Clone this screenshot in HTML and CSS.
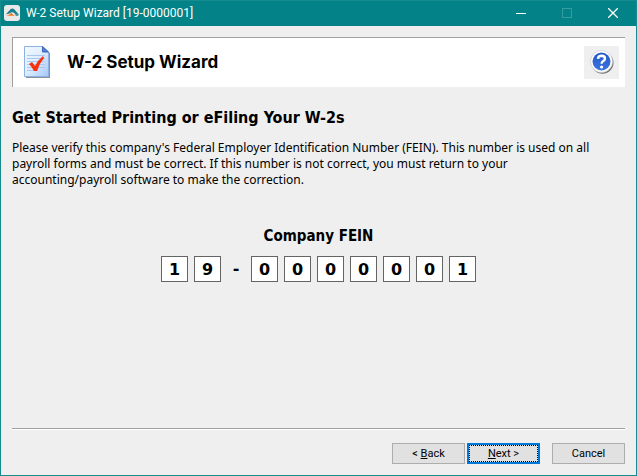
FILE: index.html
```
<!DOCTYPE html>
<html lang="en">
<head>
    <meta charset="UTF-8">
    <meta name="viewport" content="width=device-width, initial-scale=1.0">
    <title>W-2 Setup Wizard [19-0000001]</title>
    <link rel="stylesheet" href="styles.css">
</head>
<body>
    <div class="window">
        <div class="title-bar">
            <svg class="app-icon" width="16" height="16" viewBox="0 0 16 16" aria-hidden="true">
                <rect x="0" y="0" width="16" height="16" rx="3" fill="#e9e9e9"/>
                <path d="M2 9.2L6.5 4.2Q8 3 10 4L14.8 9.5H11.5Q10 6.8 7.5 7.2Q5 9.2 2 9.2Z" fill="#167f90"/>
                <path d="M2 10.8Q5 10.4 7.5 7.8Q8.5 10 11 10.8Z" fill="#f07a22"/>
                <path d="M11 9.5H15L14 10.8H12Z" fill="#167f90"/>
            </svg>
            <span class="title-text">W-2 Setup Wizard [19-0000001]</span>
            <div class="window-controls">
                <button type="button" class="control" aria-label="Minimize">
                    <svg width="10" height="10" viewBox="0 0 10 10"><path d="M0 5.5H10" stroke="#fff"/></svg>
                </button>
                <button type="button" class="control" aria-label="Maximize" disabled>
                    <svg width="10" height="10" viewBox="0 0 10 10"><rect x="0.5" y="0.5" width="9" height="9" fill="none" stroke="#369c9f"/></svg>
                </button>
                <button type="button" class="control" aria-label="Close">
                    <svg width="10" height="10" viewBox="0 0 10 10"><path d="M0 0L10 10M10 0L0 10" stroke="#fff" stroke-width="1.3"/></svg>
                </button>
            </div>
        </div>

        <form class="wizard">
            <div class="banner">
                <svg class="doc-icon" width="26" height="32" viewBox="0 0 26 32" aria-hidden="true">
                    <defs>
                        <linearGradient id="paper" x1="0" y1="0" x2="1" y2="1">
                            <stop offset="0" stop-color="#f4faff"/>
                            <stop offset="0.5" stop-color="#dcecff"/>
                            <stop offset="1" stop-color="#a3c8f8"/>
                        </linearGradient>
                    </defs>
                    <path d="M2 2H20L26 7V32H2Z" fill="#8a8f98"/>
                    <path d="M0.5 0.5H18.5L24.5 6V30.5H0.5Z" fill="url(#paper)" stroke="#8fb2e6"/>
                    <path d="M18.5 0.5V6H24.5Z" fill="#4f83d8" stroke="#3d69b5"/>
                    <path d="M3 9.5H21M3 12.5H21M3 15.5H21M3 18.5H21M3 21.5H21M3 24.5H14" stroke="#a9c8f1"/>
                    <path d="M5 18L8 16L11 20Q14 14 19 10L20 12Q15 18 13 25L10 25Q8 21 5 18Z" fill="#f8310c"/>
                </svg>
                <h1 class="banner-title">W-2 Setup Wizard</h1>
                <button type="button" class="help-button" aria-label="Help">
                    <svg width="24" height="24" viewBox="0 0 24 24">
                        <defs>
                            <linearGradient id="ball" x1="0" y1="0" x2="0" y2="1">
                                <stop offset="0" stop-color="#2459c4"/>
                                <stop offset="1" stop-color="#3c74e0"/>
                            </linearGradient>
                        </defs>
                        <circle cx="12.5" cy="12.8" r="11" fill="#777"/>
                        <circle cx="11.5" cy="11.5" r="11" fill="#fff" stroke="#c9ccd2" stroke-width="0.7"/>
                        <circle cx="11.5" cy="11.5" r="9" fill="url(#ball)"/>
                        <path d="M8 8.8Q8.2 5.8 11.5 5.8Q15 5.9 15 8.6Q15 10.2 13 11.2Q11.6 12 11.6 13.8" fill="none" stroke="#fff" stroke-width="2.4"/>
                        <circle cx="11.6" cy="17" r="1.6" fill="#fff"/>
                    </svg>
                </button>
            </div>

            <h2 class="page-heading">Get Started Printing or eFiling Your W-2s</h2>
            <p class="intro">Please verify this company's Federal Employer Identification Number (FEIN). This number is used on all payroll forms and must be correct. If this number is not correct, you must return to your<br>accounting/payroll software to make the correction.</p>

            <h3 class="fein-label" id="fein-label">Company FEIN</h3>
            <div class="fein" role="group" aria-labelledby="fein-label">
                <input class="digit" type="text" value="1" maxlength="1" aria-label="Digit 1">
                <input class="digit" type="text" value="9" maxlength="1" aria-label="Digit 2">
                <span class="dash">-</span>
                <input class="digit" type="text" value="0" maxlength="1" aria-label="Digit 3">
                <input class="digit" type="text" value="0" maxlength="1" aria-label="Digit 4">
                <input class="digit" type="text" value="0" maxlength="1" aria-label="Digit 5">
                <input class="digit" type="text" value="0" maxlength="1" aria-label="Digit 6">
                <input class="digit" type="text" value="0" maxlength="1" aria-label="Digit 7">
                <input class="digit" type="text" value="0" maxlength="1" aria-label="Digit 8">
                <input class="digit" type="text" value="1" maxlength="1" aria-label="Digit 9">
            </div>

            <div class="footer">
                <button type="button" class="button">&lt; <u>B</u>ack</button>
                <button type="submit" class="button button-default"><span class="focus-ring"><u>N</u>ext &gt;</span></button>
                <button type="button" class="button button-cancel">Cancel</button>
            </div>
        </form>
    </div>
</body>
</html>
```
FILE: styles.css
```
* {
    box-sizing: border-box;
}

body {
    margin: 0;
    font-family: "DejaVu Sans Condensed", "DejaVu Sans", Tahoma, sans-serif;
    font-size: 12px;
    color: #000;
}

.window {
    display: flex;
    flex-direction: column;
    min-height: 100vh;
    border: 1px solid #158b8d;
    background-color: #efefef;
}

.title-bar {
    display: flex;
    align-items: center;
    height: 25px;
    padding: 0 0 1px 3px;
    background-color: #038387;
    color: #fff;
}

.title-text {
    flex: 1;
    margin-left: 6px;
    font-family: Roboto, "Segoe UI", sans-serif;
    font-size: 12px;
    line-height: 16px;
}

.window-controls {
    display: flex;
}

.control {
    display: flex;
    align-items: center;
    justify-content: center;
    width: 46px;
    height: 24px;
    padding: 0;
    border: none;
    background: none;
}

.wizard {
    display: flex;
    flex: 1;
    flex-direction: column;
    padding: 11px;
}

.banner {
    display: flex;
    align-items: center;
    height: 50px;
    padding: 0 6px 1px 11px;
    border-top: 1px solid #a0a0a0;
    border-left: 1px solid #a0a0a0;
    background-color: #fff;
}

.banner-title {
    flex: 1;
    margin: 0 0 0 17px;
    font-family: Inter, Arial, sans-serif;
    font-size: 17px;
    line-height: 20px;
}

.help-button {
    display: flex;
    align-items: center;
    justify-content: center;
    width: 35px;
    height: 33px;
    padding: 0;
    border: none;
    background-color: #efefef;
}

.page-heading {
    margin: 21px 0 12px;
    font-size: 16px;
    line-height: 20px;
}

.intro {
    margin: 0;
    padding-right: 16px;
    font-family: "Noto Sans", Tahoma, sans-serif;
    font-size: 12px;
    line-height: 16px;
}

.fein-label {
    margin: 38px 0 10px;
    font-size: 15px;
    line-height: 20px;
    text-align: center;
}

.fein {
    display: flex;
    justify-content: center;
    gap: 6px;
}

.digit {
    width: 27px;
    height: 26px;
    padding: 0;
    border: 1px solid #646464;
    background-color: #fff;
    font: bold 16px "DejaVu Sans", Tahoma, sans-serif;
    text-align: center;
}

.dash {
    width: 18px;
    font: bold 16px/26px "DejaVu Sans", Tahoma, sans-serif;
    text-align: center;
}

.footer {
    display: flex;
    justify-content: flex-end;
    gap: 2px;
    margin-top: auto;
    padding-top: 14px;
    border-top: 1px solid #a0a0a0;
    box-shadow: inset 0 1px #fff;
}

.button {
    width: 73px;
    height: 21px;
    padding: 0;
    border: 1px solid #adadad;
    background-color: #e1e1e1;
    color: #000;
    font-family: Roboto, "Segoe UI", sans-serif;
    font-size: 11px;
    line-height: 15px;
}

.button-default {
    border: 2px solid #0078d7;
}

.focus-ring {
    display: block;
    border: 1px dotted #000;
}

.button-cancel {
    margin-left: 10px;
}
```
